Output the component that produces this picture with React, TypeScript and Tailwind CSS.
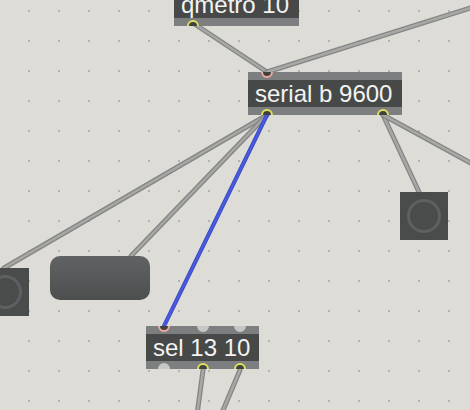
import React from 'react';

type Port = { x: number; kind: 'in' | 'out' | 'idle' };

interface ObjProps {
  text: string;
  left: number;
  top: number;
  width: number;
  inlets?: Port[];
  outlets?: Port[];
}

const ringColor = {
  in: 'border-[#f1a99d] bg-[#3e4140]',
  out: 'border-[#dfe05e] bg-[#3e4140]',
  idle: 'border-[#c6c7c6] bg-[#c6c7c6]',
};

function MaxObject({ text, left, top, width, inlets = [], outlets = [] }: ObjProps) {
  return (
    <div
      className="absolute flex flex-col overflow-hidden bg-[#7d7e80]"
      style={{ left, top, width, height: 43 }}
    >
      <div className="h-[8px]" />
      <div className="flex h-[27px] items-center bg-[#464948] pl-[7px] text-[24px] leading-[27px] whitespace-nowrap text-[#f3f3f3] font-['Liberation_Sans',Arial,sans-serif]">
        {text}
      </div>
      <div className="h-[8px]" />
      {inlets.map((p, i) => (
        <div
          key={'i' + i}
          className={`absolute top-[-6px] h-[12px] w-[12px] rounded-full border-2 ${ringColor[p.kind]}`}
          style={{ left: p.x - 6 }}
        />
      ))}
      {outlets.map((p, i) => (
        <div
          key={'o' + i}
          className={`absolute bottom-[-6px] h-[12px] w-[12px] rounded-full border-2 ${ringColor[p.kind]}`}
          style={{ left: p.x - 6 }}
        />
      ))}
    </div>
  );
}

function ButtonBox({ left, top }: { left: number; top: number }) {
  return (
    <div
      className="absolute flex h-[48px] w-[48px] items-center justify-center bg-[#494c4b]"
      style={{ left, top }}
    >
      <div className="h-[34px] w-[34px] rounded-full border-[3px] border-[#5d6061]" />
    </div>
  );
}

const grayCords: [number, number, number, number][] = [
  [193, 23, 267, 72],
  [480, 5, 267, 72],
  [267, 115, 4, 268],
  [267, 115, 131, 256],
  [383, 115, 419, 192],
  [383, 115, 480, 168],
  [203, 370, 197, 415],
  [240, 370, 221, 415],
];

export default function App() {
  return (
    <div className="relative h-[410px] w-[470px] overflow-hidden bg-[#dddcd7]">
      <svg className="absolute inset-0" width={470} height={410}>
        <defs>
          <pattern id="grid" width="30" height="30" patternUnits="userSpaceOnUse">
            <rect x="28" y="10" width="2" height="2" fill="#b2b2ae" />
          </pattern>
        </defs>
        <rect width="470" height="410" fill="url(#grid)" />
        {grayCords.map(([x1, y1, x2, y2], i) => (
          <g key={i} strokeLinecap="round">
            <line x1={x1} y1={y1} x2={x2} y2={y2} stroke="#858584" strokeWidth={5} />
            <line x1={x1} y1={y1} x2={x2} y2={y2} stroke="#a7a7a5" strokeWidth={2.5} />
          </g>
        ))}
        <line x1={267} y1={115} x2={164} y2={326} stroke="#3b4ac4" strokeWidth={4} strokeLinecap="round" />
        <line x1={267} y1={115} x2={164} y2={326} stroke="#4b5be0" strokeWidth={2} strokeLinecap="round" />
      </svg>

      <MaxObject
        text="qmetro 10"
        left={174}
        top={-17}
        width={125}
        outlets={[{ x: 19, kind: 'out' }]}
      />
      <MaxObject
        text="serial b 9600"
        left={248}
        top={72}
        width={154}
        inlets={[{ x: 19, kind: 'in' }]}
        outlets={[
          { x: 19, kind: 'out' },
          { x: 135, kind: 'out' },
        ]}
      />
      <MaxObject
        text="sel 13 10"
        left={146}
        top={326}
        width={113}
        inlets={[
          { x: 18, kind: 'in' },
          { x: 57, kind: 'idle' },
          { x: 94, kind: 'idle' },
        ]}
        outlets={[
          { x: 18, kind: 'idle' },
          { x: 57, kind: 'out' },
          { x: 94, kind: 'out' },
        ]}
      />

      <ButtonBox left={400} top={192} />
      <ButtonBox left={-19} top={268} />

      <div className="absolute left-[50px] top-[256px] h-[44px] w-[100px] rounded-[10px] bg-gradient-to-b from-[#606265] to-[#4c4f4e]" />
    </div>
  );
}
